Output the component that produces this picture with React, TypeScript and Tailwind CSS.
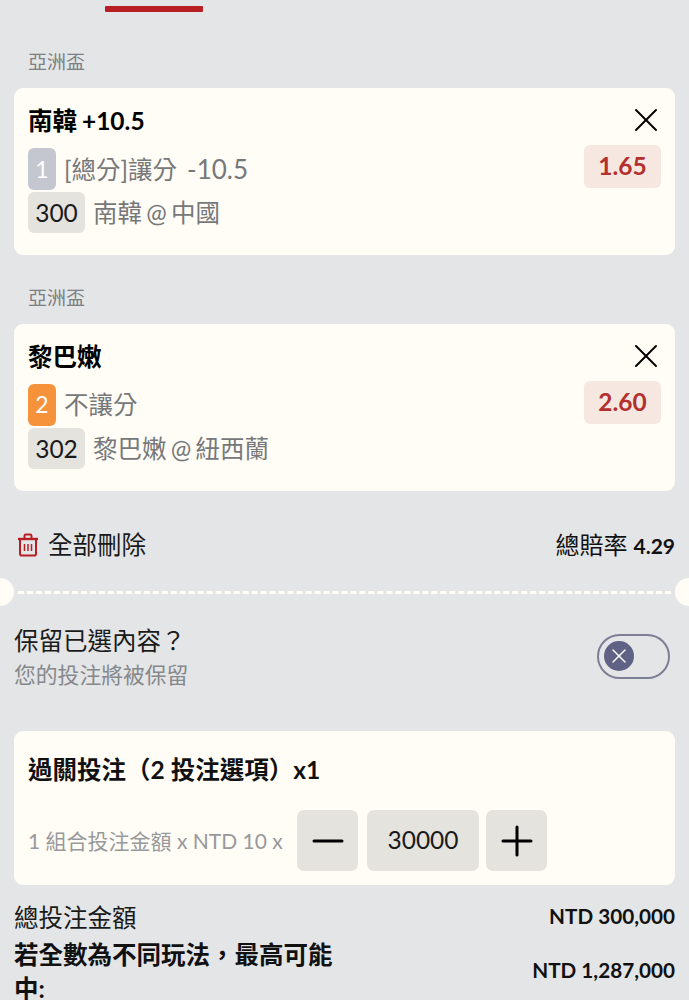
import { X, Plus, Minus } from "lucide-react"

const fontStack = "font-['Lato','Noto_Sans_CJK_TC','Noto_Sans',sans-serif]"

function TrashIcon() {
  return (
    <svg viewBox="0 0 22 24" className="w-[22px] h-[24px] text-[#b81f24]" fill="none" stroke="currentColor" strokeWidth="2">
      <path d="M1 6h20" strokeWidth="2.4" />
      <path d="M7.5 5.5V2.8c0-.7.6-1.3 1.3-1.3h4.4c.7 0 1.3.6 1.3 1.3v2.7" />
      <path d="M3 6.5v14.2c0 1 .8 1.8 1.8 1.8h12.4c1 0 1.8-.8 1.8-1.8V6.5" />
      <path d="M7.5 11v7M11 11v7M14.5 11v7" strokeWidth="1.5" />
    </svg>
  )
}

function Selection(props: {
  league: string
  title: string
  num: string
  numClass: string
  market: string
  marketNum?: string
  odds: string
  code: string
  teams: string
}) {
  return (
    <div>
      <div className="pl-[28px] h-[27px] text-[19px] leading-[27px] text-[#7d7f82]">{props.league}</div>
      <div className="mx-[14px] mt-[13px] h-[167px] rounded-[9px] bg-[#fffdf6] px-[14px] pt-[14px]">
        <div className="flex items-center justify-between h-[36px]">
          <div className="pt-[2px] text-[24.5px] leading-[36px] font-bold text-black [word-spacing:-1px]">{props.title}</div>
          <X className="w-[40px] h-[40px] -my-[2px] -mr-[5px] text-black" strokeWidth={1.2} />
        </div>
        <div className="flex items-start justify-between mt-[9px] h-[42px]">
          <div className="flex items-center">
            <div className={`w-[28px] h-[42px] rounded-[6px] flex items-center justify-center text-[23px] text-white ${props.numClass}`}>
              {props.num}
            </div>
            <div className="ml-[8px] pt-[1px] text-[24.5px] leading-[42px] text-[#77787a]">
              {props.market}
              {props.marketNum && <span className="ml-[10px] text-[26px]">{props.marketNum}</span>}
            </div>
          </div>
          <div className="w-[77px] h-[43px] -mt-[2px] rounded-[6px] bg-[#f6e7e1] flex items-center justify-center text-[24.5px] font-bold text-[#b3302e]">
            {props.odds}
          </div>
        </div>
        <div className="flex items-center mt-[3px]">
          <div className="w-[57px] h-[41px] pt-[1px] rounded-[6px] bg-[#e5e3de] flex items-center justify-center text-[24.5px] text-[#1a1a1a]">
            {props.code}
          </div>
          <div className="ml-[8px] pt-[1px] text-[24.5px] leading-[40px] text-[#77787a] [word-spacing:-2px]">{props.teams}</div>
        </div>
      </div>
    </div>
  )
}

export default function App() {
  return (
    <div className={`relative w-[689px] h-[1000px] overflow-hidden bg-[#e3e5e7] ${fontStack}`}>
      <div className="ml-[105px] mt-[6px] w-[98px] h-[6px] bg-[#b81f24] rounded-[1px]" />

      <div className="mt-[36px] flex flex-col gap-[29px]">
        <Selection
          league="亞洲盃"
          title="南韓 +10.5"
          num="1"
          numClass="bg-[#c4c6d0]"
          market="[總分]讓分"
          marketNum="-10.5"
          odds="1.65"
          code="300"
          teams="南韓 @ 中國"
        />
        <Selection
          league="亞洲盃"
          title="黎巴嫩"
          num="2"
          numClass="bg-[#f6933a]"
          market="不讓分"
          odds="2.60"
          code="302"
          teams="黎巴嫩 @ 紐西蘭"
        />
      </div>

      <div className="mt-[36px] mx-[14px] flex items-center justify-between h-[36px]">
        <div className="flex items-center pl-[3px]">
          <TrashIcon />
          <span className="ml-[9px] text-[24.5px] text-[#1a1a1a]">全部刪除</span>
        </div>
        <div className="flex items-baseline text-[#111]">
          <span className="text-[24px]">總賠率</span>
          <span className="ml-[6px] text-[21px] font-bold">4.29</span>
        </div>
      </div>

      {/* ticket tear line */}
      <div className="relative mt-[15px] h-[28px] flex items-center">
        <div className="absolute left-[-14px] top-0 w-[28px] h-[28px] rounded-full bg-[#fffdf6]" />
        <div className="absolute right-[-14px] top-0 w-[28px] h-[28px] rounded-full bg-[#fffdf6]" />
        <div className="mx-[18px] flex-1 border-t-[3px] border-dashed border-[#fffdf6]" />
      </div>

      <div className="mt-[18px] mx-[14px] flex items-center justify-between pr-[5px]">
        <div>
          <div className="text-[24.5px] leading-[34px] text-[#1a1a1a]">保留已選內容？</div>
          <div className="mt-[1px] text-[21.8px] leading-[32px] text-[#86888b]">您的投注將被保留</div>
        </div>
        <div className="w-[73px] h-[45px] rounded-full border-2 border-[#7d7f95] flex items-center pl-[5px] mt-[-3px]">
          <div className="w-[30px] h-[30px] rounded-full bg-[#5f6185] flex items-center justify-center">
            <X className="w-[24px] h-[24px] text-white" strokeWidth={1.4} />
          </div>
        </div>
      </div>

      <div className="mt-[40px] mx-[14px] h-[154px] rounded-[9px] bg-[#fffdf6] px-[14px] pt-[21px]">
        <div className="text-[24.5px] leading-[36px] font-bold text-[#111]">過關投注（2 投注選項）x1</div>
        <div className="flex items-center mt-[22px]">
          <div className="w-[269px] whitespace-nowrap text-[21px] text-[#98999b]">1 組合投注金額 x NTD 10 x</div>
          <div className="w-[61px] h-[61px] rounded-[7px] bg-[#e5e3de] flex items-center justify-center">
            <Minus className="w-[48px] h-[48px] text-black" strokeWidth={1.5} />
          </div>
          <div className="ml-[9px] w-[112px] h-[61px] rounded-[7px] bg-[#e5e3de] flex items-center justify-center text-[24.5px] text-[#1a1a1a]">
            30000
          </div>
          <div className="ml-[7px] w-[61px] h-[61px] rounded-[7px] bg-[#e5e3de] flex items-center justify-center">
            <Plus className="w-[48px] h-[48px] text-black" strokeWidth={1.5} />
          </div>
        </div>
      </div>

      <div className="mt-[15px] mx-[14px] flex items-center justify-between h-[36px]">
        <div className="text-[24.5px] text-[#1a1a1a]">總投注金額</div>
        <div className="text-[20.7px] font-bold text-[#111] mt-[-2px]">NTD 300,000</div>
      </div>
      <div className="mt-[2px] mx-[14px] flex items-center justify-between">
        <div className="w-[325px] text-[24.5px] leading-[34px] font-bold text-[#111]">若全數為不同玩法，最高可能中:</div>
        <div className="text-[20.7px] font-bold text-[#111] mt-[-3px]">NTD 1,287,000</div>
      </div>
    </div>
  )
}
